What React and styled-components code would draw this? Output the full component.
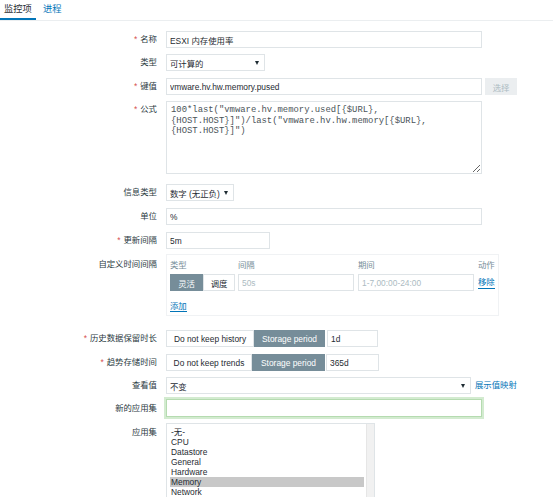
import React from 'react'
import styled, { createGlobalStyle } from 'styled-components'

const GlobalStyle = createGlobalStyle`
  html, body {
    margin: 0;
    padding: 0;
    background: #fff;
    overflow: hidden;
  }
  body {
    font-family: "Liberation Sans", Arial, "Noto Sans CJK SC", sans-serif;
    color: #1f2c33;
  }
  * { box-sizing: border-box; }
`

const TabBar = styled.div`
  display: flex;
  height: 21px;
  border-bottom: 1px solid #ebeef0;
`

const Tab = styled.div`
  padding: 0 4px;
  margin-right: 3px;
  height: 20px;
  line-height: 18px;
  font-size: 9.3px;
  color: ${(p) => (p.$active ? '#1f2c33' : '#0275b8')};
  border-bottom: 2px solid ${(p) => (p.$active ? '#0275b8' : 'transparent')};
`

const Form = styled.div`
  padding-top: 10px;
`

const Row = styled.div`
  display: grid;
  grid-template-columns: 157px auto;
  column-gap: 9px;
  align-items: start;
  margin-top: ${(p) => p.$mt || 0}px;
`

const Label = styled.div`
  text-align: right;
  font-size: 8.4px;
  line-height: 17px;
  white-space: nowrap;
  color: #2b3a42;
  padding-top: ${(p) => p.$pt || 0}px;
`

const Star = styled.span`
  color: #d64e4e;
  margin-right: 3px;
`

const Field = styled.div`
  display: flex;
  align-items: center;
`

const Input = styled.input`
  width: ${(p) => p.$w}px;
  height: ${(p) => p.$h || 17}px;
  padding: 0 3px;
  border: 1px solid #dfe4e7;
  background: #fff;
  font-family: inherit;
  font-size: 8.4px;
  color: #1f2c33;
  outline: none;
  margin-left: ${(p) => p.$ml || 0}px;
  &::placeholder {
    color: #acbbc2;
  }
`

const FocusInput = styled(Input)`
  border-color: #b5dbb0;
  box-shadow: 0 0 0 2px #d3ebd0;
`

const Select = styled.div`
  display: flex;
  align-items: center;
  justify-content: space-between;
  width: ${(p) => p.$w}px;
  height: 17px;
  padding: 0 5px 0 3px;
  border: 1px solid #dfe4e7;
  font-size: 8.4px;
`

const Arrow = styled.span`
  width: 0;
  height: 0;
  border-left: 2.5px solid transparent;
  border-right: 2.5px solid transparent;
  border-top: 4px solid #1f2c33;
`

const GreyButton = styled.button`
  width: 32px;
  height: 17px;
  margin-left: 3px;
  border: none;
  background: #ebeef0;
  color: #acbbc2;
  font-family: inherit;
  font-size: 8.4px;
  padding: 0;
`

const Formula = styled.textarea`
  width: 316px;
  height: 73px;
  padding: 3px 4px;
  border: 1px solid #dfe4e7;
  font-family: "Liberation Mono", "Courier New", monospace;
  font-size: 8.9px;
  line-height: 10.5px;
  color: #4a5358;
  outline: none;
  display: block;
`

const IntervalBox = styled.div`
  width: 333px;
  border: 1px solid #f0f2f4;
  padding: 3px;
  display: grid;
  grid-template-columns: 68px 120px 120px auto;
  row-gap: 2px;
`

const ColHead = styled.div`
  color: #768d99;
  font-size: 8.4px;
  line-height: 14px;
`

const Toggles = styled.div`
  display: flex;
  height: 17px;
`

const Toggle = styled.div`
  width: ${(p) => p.$w}px;
  height: 17px;
  display: flex;
  align-items: center;
  justify-content: center;
  font-size: 8.4px;
  white-space: nowrap;
  border: 1px solid ${(p) => (p.$on ? '#768d99' : '#dfe4e7')};
  background: ${(p) => (p.$on ? '#768d99' : '#fff')};
  color: ${(p) => (p.$on ? '#fff' : '#1f2c33')};
`

const Link = styled.span`
  color: #0275b8;
  font-size: 8.4px;
  line-height: 11px;
  border-bottom: 1px solid ${(p) => (p.$plain ? 'transparent' : '#0275b8')};
  align-self: center;
  justify-self: start;
  margin-left: ${(p) => p.$ml || 0}px;
`

const AddCell = styled.div`
  grid-column: 1 / -1;
  padding-top: 4px;
  line-height: 14px;
`

const ListBox = styled.div`
  display: flex;
  width: 209px;
  height: 80px;
  overflow: hidden;
  border: 1px solid #dfe4e7;
`

const ListItems = styled.div`
  flex: 1;
  padding: 3px 2px 0 3px;
`

const ListItem = styled.div`
  font-size: 8.4px;
  line-height: 10px;
  height: 10px;
  padding-left: 1px;
  background: ${(p) => (p.$sel ? '#c8c8c8' : 'transparent')};
`

const ScrollTrack = styled.div`
  width: 8px;
  background: #f1f1f1;
  border-left: 1px solid #e6e6e6;
`

const apps = ['-无-', 'CPU', 'Datastore', 'General', 'Hardware', 'Memory', 'Network']

const formula =
  '100*last("vmware.hv.memory.used[{$URL},\n{HOST.HOST}]")/last("vmware.hv.hw.memory[{$URL},\n{HOST.HOST}]")'

function Req({ children }) {
  return (
    <>
      <Star>*</Star>
      {children}
    </>
  )
}

export default function App() {
  return (
    <>
      <GlobalStyle />
      <TabBar>
        <Tab $active>监控项</Tab>
        <Tab>进程</Tab>
      </TabBar>
      <Form>
        <Row>
          <Label><Req>名称</Req></Label>
          <Field><Input $w={316} readOnly value="ESXI 内存使用率" /></Field>
        </Row>
        <Row $mt={6}>
          <Label>类型</Label>
          <Field><Select $w={99}>可计算的<Arrow /></Select></Field>
        </Row>
        <Row $mt={7}>
          <Label><Req>键值</Req></Label>
          <Field>
            <Input $w={316} readOnly value="vmware.hv.hw.memory.pused" />
            <GreyButton>选择</GreyButton>
          </Field>
        </Row>
        <Row $mt={6}>
          <Label><Req>公式</Req></Label>
          <Field><Formula readOnly value={formula} /></Field>
        </Row>
        <Row $mt={10}>
          <Label>信息类型</Label>
          <Field><Select $w={68}>数字 (无正负)<Arrow /></Select></Field>
        </Row>
        <Row $mt={7}>
          <Label>单位</Label>
          <Field><Input $w={316} readOnly value="%" /></Field>
        </Row>
        <Row $mt={7}>
          <Label><Req>更新间隔</Req></Label>
          <Field><Input $w={104} readOnly value="5m" /></Field>
        </Row>
        <Row $mt={5}>
          <Label $pt={2}>自定义时间间隔</Label>
          <IntervalBox>
            <ColHead>类型</ColHead>
            <ColHead>间隔</ColHead>
            <ColHead>期间</ColHead>
            <ColHead>动作</ColHead>
            <Toggles>
              <Toggle $w={33} $on>灵活</Toggle>
              <Toggle $w={32}>调度</Toggle>
            </Toggles>
            <Input $w={116} readOnly placeholder="50s" />
            <Input $w={116} readOnly placeholder="1-7,00:00-24:00" />
            <Link>移除</Link>
            <AddCell><Link>添加</Link></AddCell>
          </IntervalBox>
        </Row>
        <Row $mt={14}>
          <Label><Req>历史数据保留时长</Req></Label>
          <Field>
            <Toggles>
              <Toggle $w={88}>Do not keep history</Toggle>
              <Toggle $w={71} $on>Storage period</Toggle>
            </Toggles>
            <Input $w={51} $ml={2} readOnly value="1d" />
          </Field>
        </Row>
        <Row $mt={7}>
          <Label><Req>趋势存储时间</Req></Label>
          <Field>
            <Toggles>
              <Toggle $w={86}>Do not keep trends</Toggle>
              <Toggle $w={73} $on>Storage period</Toggle>
            </Toggles>
            <Input $w={53} $ml={1} readOnly value="365d" />
          </Field>
        </Row>
        <Row $mt={6}>
          <Label>查看值</Label>
          <Field>
            <Select $w={305}>不变<Arrow /></Select>
            <Link $ml={4} $plain>展示值映射</Link>
          </Field>
        </Row>
        <Row $mt={5}>
          <Label $pt={1}>新的应用集</Label>
          <Field><FocusInput $w={316} $h={18} readOnly value="" /></Field>
        </Row>
        <Row $mt={6}>
          <Label $pt={1}>应用集</Label>
          <ListBox>
            <ListItems>
              {apps.map((a) => (
                <ListItem key={a} $sel={a === 'Memory'}>{a}</ListItem>
              ))}
            </ListItems>
            <ScrollTrack />
          </ListBox>
        </Row>
      </Form>
    </>
  )
}
